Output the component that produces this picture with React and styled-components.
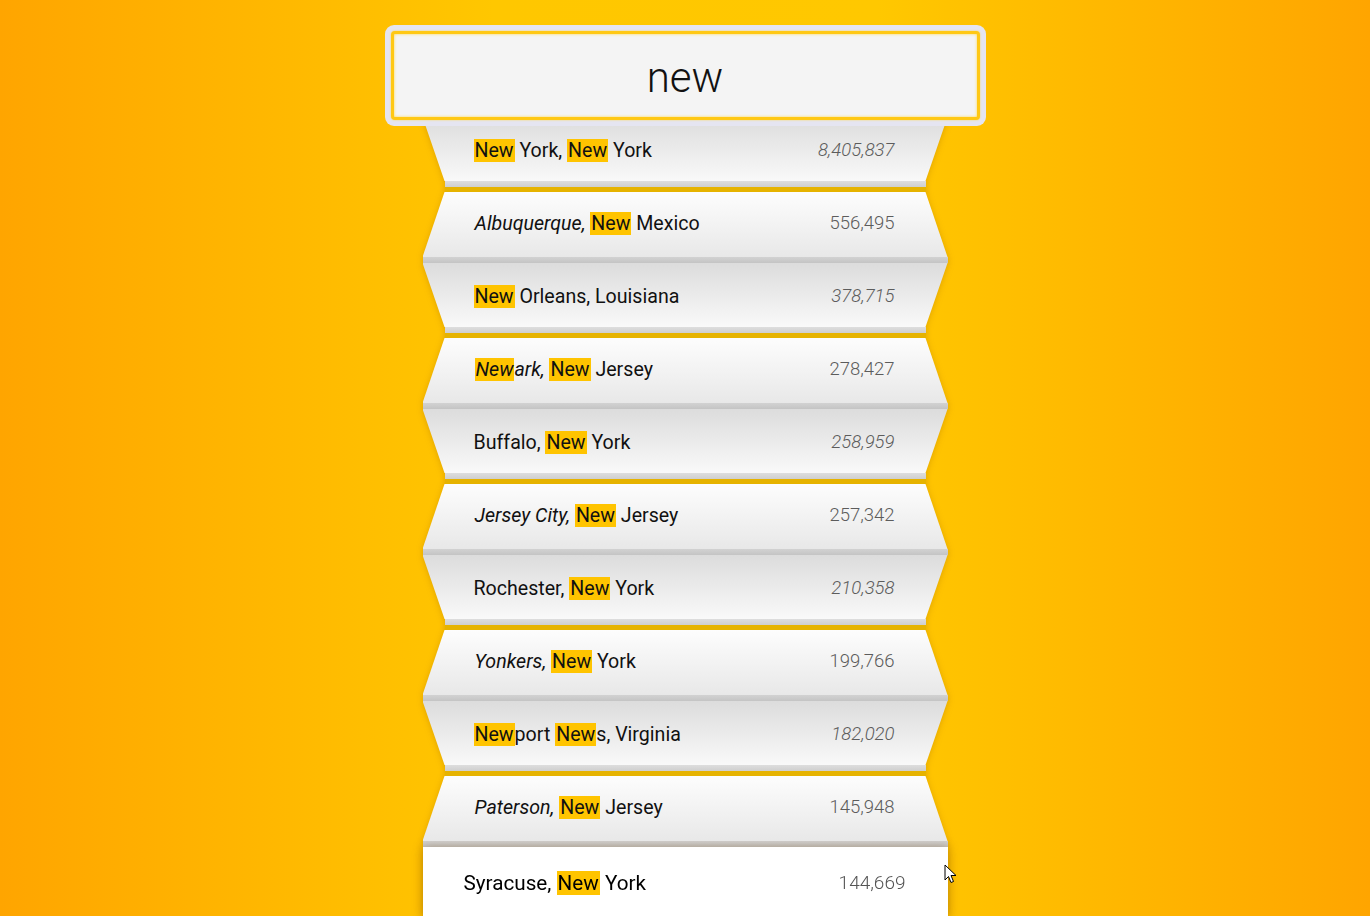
import React from 'react';
import styled, { createGlobalStyle, css } from 'styled-components';

const cities = [
  { city: 'New York', state: 'New York', pop: '8,405,837' },
  { city: 'Albuquerque', state: 'New Mexico', pop: '556,495' },
  { city: 'New Orleans', state: 'Louisiana', pop: '378,715' },
  { city: 'Newark', state: 'New Jersey', pop: '278,427' },
  { city: 'Buffalo', state: 'New York', pop: '258,959' },
  { city: 'Jersey City', state: 'New Jersey', pop: '257,342' },
  { city: 'Rochester', state: 'New York', pop: '210,358' },
  { city: 'Yonkers', state: 'New York', pop: '199,766' },
  { city: 'Newport News', state: 'Virginia', pop: '182,020' },
  { city: 'Paterson', state: 'New Jersey', pop: '145,948' },
  { city: 'Syracuse', state: 'New York', pop: '144,669' },
];

const query = 'new';

function highlight(text) {
  const parts = text.split(new RegExp(`(${query})`, 'gi'));
  return parts.map((part, i) =>
    part.toLowerCase() === query ? <Mark key={i}>{part}</Mark> : part
  );
}

function App() {
  return (
    <Page>
      <GlobalStyle />
      <Column>
        <SearchBox>
          <SearchInput defaultValue={query} />
        </SearchBox>
        <List>
          {cities.map((c, i) => {
            const flat = i === cities.length - 1;
            const fold = flat ? 'flat' : i % 2 === 0 ? 'down' : 'up';
            return (
              <Row key={c.city} $fold={fold}>
                <Face $fold={fold}>
                  <Name $flat={flat}>
                    <City $italic={fold === 'up'}>{highlight(c.city)},</City>{' '}
                    {highlight(c.state)}
                  </Name>
                  <Pop $italic={fold === 'down'} $flat={flat}>
                    {c.pop}
                  </Pop>
                </Face>
                {fold === 'up' && <Crease />}
                {fold === 'down' && (
                  <>
                    <Ledge />
                    <FoldShadow />
                  </>
                )}
              </Row>
            );
          })}
        </List>
      </Column>
      <Cursor viewBox="0 0 13 21" width="13" height="21">
        <path
          d="M1 1 L1 16 L4.5 12.5 L7 18.5 L9.5 17.5 L7 11.5 L12 11.5 Z"
          fill="#fff"
          stroke="#000"
          strokeWidth="1"
          strokeLinejoin="round"
        />
      </Cursor>
    </Page>
  );
}

const GlobalStyle = createGlobalStyle`
  html, body {
    margin: 0;
    padding: 0;
    height: 100%;
  }
  body {
    font-family: Roboto, "Liberation Sans", sans-serif;
    overflow: hidden;
  }
`;

const Page = styled.div`
  position: relative;
  height: 916px;
  overflow: hidden;
  background: linear-gradient(
    90deg,
    #ffa500 0%,
    #ffc700 36%,
    #ffc800 64%,
    #ffa500 100%
  );
`;

const Column = styled.div`
  display: flex;
  flex-direction: column;
  align-items: center;
  padding-top: 25px;
`;

const SearchBox = styled.div`
  position: relative;
  z-index: 2;
  width: 601px;
  height: 101px;
  box-sizing: border-box;
  padding: 6px;
  border-radius: 9px;
  background: #e5e5f1;
  display: flex;
`;

const SearchInput = styled.input`
  flex: 1;
  min-width: 0;
  box-sizing: border-box;
  border: 3px solid #ffc814;
  border-radius: 4px;
  background: #f4f4f4;
  box-shadow: inset 0 0 3px #ffd84a, 0 0 2px #ffd84a;
  outline: none;
  text-align: center;
  font-family: Roboto, "Liberation Sans", sans-serif;
  font-weight: 300;
  font-size: 42px;
  color: #111;
  padding: 3px 0 0;
`;

const List = styled.ul`
  list-style: none;
  margin: -9px 0 0;
  padding: 0;
  width: 525px;
  filter: drop-shadow(0 1px 3px rgba(140, 80, 0, 0.28));
`;

const Row = styled.li`
  display: flex;
  flex-direction: column;
  height: ${(p) => (p.$fold === 'up' ? 71 : p.$fold === 'down' ? 75 : 70)}px;
`;

const faceStyles = {
  down: css`
    height: 64px;
    background: linear-gradient(#dcdcdc, #f9f9f9);
    clip-path: polygon(0 0, 100% 0, calc(100% - 22px) 100%, 22px 100%);
    padding: 2px 53px 0 51px;
  `,
  up: css`
    height: 65px;
    background: linear-gradient(#fdfdfd, #e8e8e8);
    clip-path: polygon(22px 0, calc(100% - 22px) 0, 100% 100%, 0 100%);
    padding: 0 53px 3px 52px;
  `,
  flat: css`
    height: 70px;
    background: #fff;
    box-shadow: 0 0 10px rgba(120, 70, 0, 0.35);
    padding: 1px 42px 0 41px;
  `,
};

const Face = styled.div`
  display: flex;
  align-items: center;
  justify-content: space-between;
  box-sizing: border-box;
  ${(p) => faceStyles[p.$fold]}
`;

const Crease = styled.div`
  height: 6px;
  background: linear-gradient(#d2d2d2, #c4c4c4);
`;

const Ledge = styled.div`
  height: 6px;
  margin: 0 22px;
  background: linear-gradient(#dedede, #cfcfcf);
`;

const FoldShadow = styled.div`
  height: 5px;
  margin: 0 22px;
  background: #e6b300;
`;

const Name = styled.span`
  font-size: ${(p) => (p.$flat ? 20.7 : 19.6)}px;
  color: ${(p) => (p.$flat ? '#000' : '#111')};
  white-space: nowrap;
`;

const City = styled.span`
  font-style: ${(p) => (p.$italic ? 'italic' : 'normal')};
`;

const Mark = styled.mark`
  background: #ffc400;
  color: inherit;
  padding: 0 1px;
  font-style: inherit;
`;

const Pop = styled.span`
  font-size: ${(p) => (p.$flat ? 19 : 18.5)}px;
  font-weight: 300;
  font-style: ${(p) => (p.$italic ? 'italic' : 'normal')};
  color: ${(p) => (p.$flat ? '#555' : '#5c5c5c')};
`;

const Cursor = styled.svg`
  position: absolute;
  left: 944px;
  top: 864px;
`;

export default App;
